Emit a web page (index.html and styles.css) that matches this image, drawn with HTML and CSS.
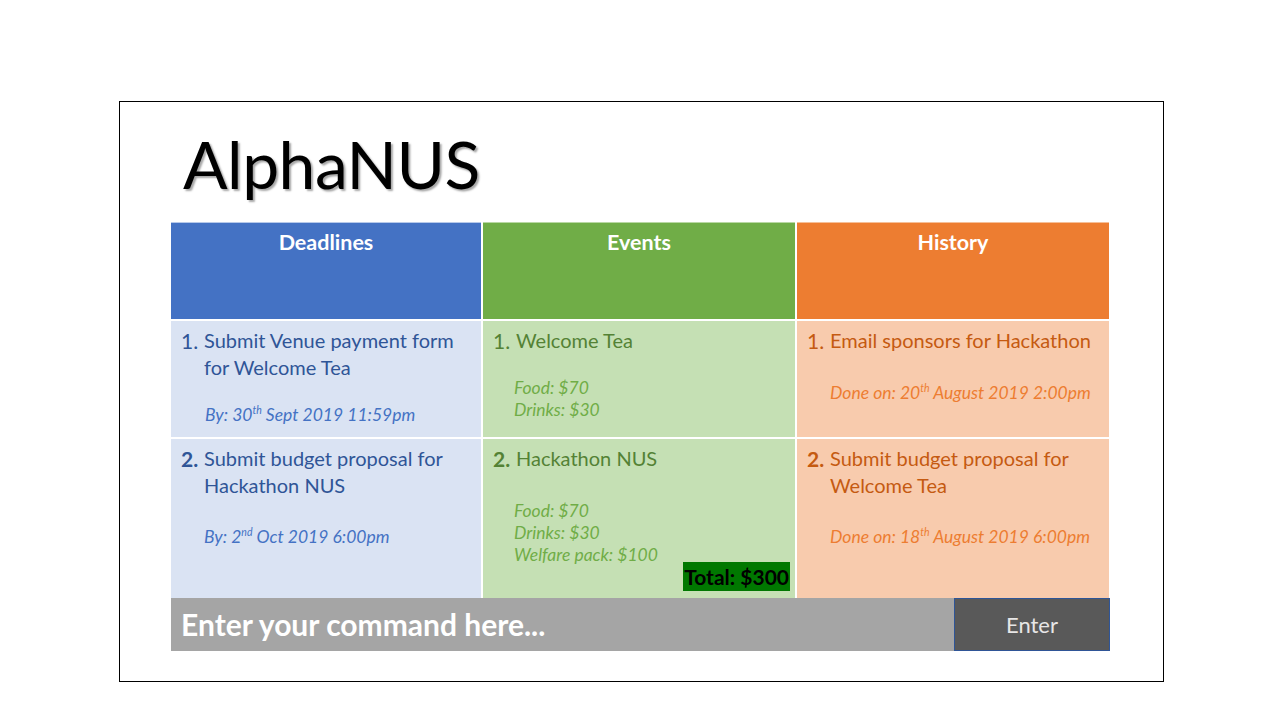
FILE: index.html
```html
<!DOCTYPE html>
<html>
<head>
<meta charset="utf-8">
<link rel="stylesheet" href="styles.css">
<title>AlphaNUS</title>
</head>
<body>
<div class="frame">
  <h1 class="title">AlphaNUS</h1>
  <div class="board">
    <div class="head head-blue">Deadlines</div>
    <div class="head head-green">Events</div>
    <div class="head head-orange">History</div>

    <div class="cell cell-blue">
      <div class="item"><span class="num">1.</span><span class="txt">Submit Venue payment form for Welcome Tea</span></div>
      <div class="note note-dl1">By: 30<sup>th</sup> Sept 2019 11:59pm</div>
    </div>
    <div class="cell cell-green">
      <div class="item"><span class="num">1.</span><span class="txt">Welcome Tea</span></div>
      <div class="note note-ev1">Food: $70<br>Drinks: $30</div>
    </div>
    <div class="cell cell-orange">
      <div class="item"><span class="num">1.</span><span class="txt">Email sponsors for Hackathon</span></div>
      <div class="note note-hi1">Done on: 20<sup>th</sup> August 2019 2:00pm</div>
    </div>

    <div class="cell cell-blue">
      <div class="item"><span class="num b">2.</span><span class="txt">Submit budget proposal for Hackathon NUS</span></div>
      <div class="note note-dl2">By: 2<sup>nd</sup> Oct 2019 6:00pm</div>
    </div>
    <div class="cell cell-green">
      <div class="item"><span class="num b">2.</span><span class="txt">Hackathon NUS</span></div>
      <div class="note note-ev2">Food: $70<br>Drinks: $30<br>Welfare pack: $100</div>
      <div class="total">Total: $300</div>
    </div>
    <div class="cell cell-orange">
      <div class="item"><span class="num b">2.</span><span class="txt">Submit budget proposal for Welcome Tea</span></div>
      <div class="note note-dl2">Done on: 18<sup>th</sup> August 2019 6:00pm</div>
    </div>
  </div>
  <div class="command">
    <div class="cmd-input">Enter your command here...</div>
    <div class="cmd-btn">Enter</div>
  </div>
</div>
</body>
</html>
```

FILE: styles.css
```css
* { box-sizing: border-box; }
html, body { margin: 0; padding: 0; background: #ffffff; }
body {
  font-family: "Lato", "Open Sans", sans-serif;
  padding: 101px 0 0 119px;
}
.frame {
  width: 1045px;
  height: 581px;
  border: 1px solid #000000;
  padding: 0 0 0 51px;
}
.title {
  margin: 22px 0 0 12px;
  height: 98px;
  font-size: 66px;
  font-weight: 400;
  line-height: 80px;
  color: #000000;
  text-shadow: 2px 2px 2px rgba(0,0,0,0.35);
  letter-spacing: -0.5px;
}
.board {
  display: grid;
  grid-template-columns: 310px 312px 312px;
  grid-template-rows: 97px 116px 159px;
  gap: 2px;
  width: 938px;
  background: #ffffff;
}
.head {
  color: #ffffff;
  font-weight: 700;
  font-size: 21.5px;
  line-height: 26px;
  text-align: center;
  padding-top: 6px;
  border-top: 1px solid #b7c9ea;
}
.head-blue { background: #4472c4; }
.head-green { background: #70ad47; border-top-color: #b9d8a4; }
.head-orange { background: #ed7d31; border-top-color: #f6bf98; }

.cell {
  font-size: 20px;
  line-height: 27px;
  display: flex;
  flex-direction: column;
  padding: 6px 10px 0 10px;
}
.cell-blue { background: #dae3f3; color: #2f5597; }
.cell-green { background: #c5e0b4; color: #548235; }
.cell-orange { background: #f8cbad; color: #c55a11; }

.item { display: flex; }
.num { width: 23px; flex: none; font-size: 21px; }
.num.b { font-weight: 700; }
.txt { flex: 1; }

.note { font-style: italic; font-size: 17.5px; line-height: 22px; }
.note sup { font-size: 10.5px; line-height: 0; vertical-align: 7px; }
.cell-blue .note { color: #4472c4; }
.cell-green .note { color: #70ad47; }
.cell-orange .note { color: #ed7d31; }

.note-dl1 { margin: 23px 0 0 24px; }
.note-ev1 { margin: 23px 0 0 21px; }
.note-hi1 { margin: 28px 0 0 23px; }
.note-dl2 { margin: 27px 0 0 23px; }
.note-ev2 { margin: 28px 0 0 21px; }

.total {
  align-self: flex-end;
  margin: -4px -5px 0 0;
  background: #007800;
  color: #000000;
  font-weight: 700;
  font-size: 21px;
  line-height: 29px;
  padding: 0 1px;
}

.command {
  display: flex;
  width: 939px;
  height: 53px;
}
.cmd-input {
  flex: 1;
  background: #a5a5a5;
  color: #ffffff;
  font-weight: 700;
  font-size: 30px;
  line-height: 53px;
  padding-left: 10px;
}
.cmd-btn {
  width: 156px;
  background: #595959;
  border: 1px solid #2f5597;
  color: #e7e6e6;
  font-size: 22px;
  line-height: 51px;
  text-align: center;
}
```
